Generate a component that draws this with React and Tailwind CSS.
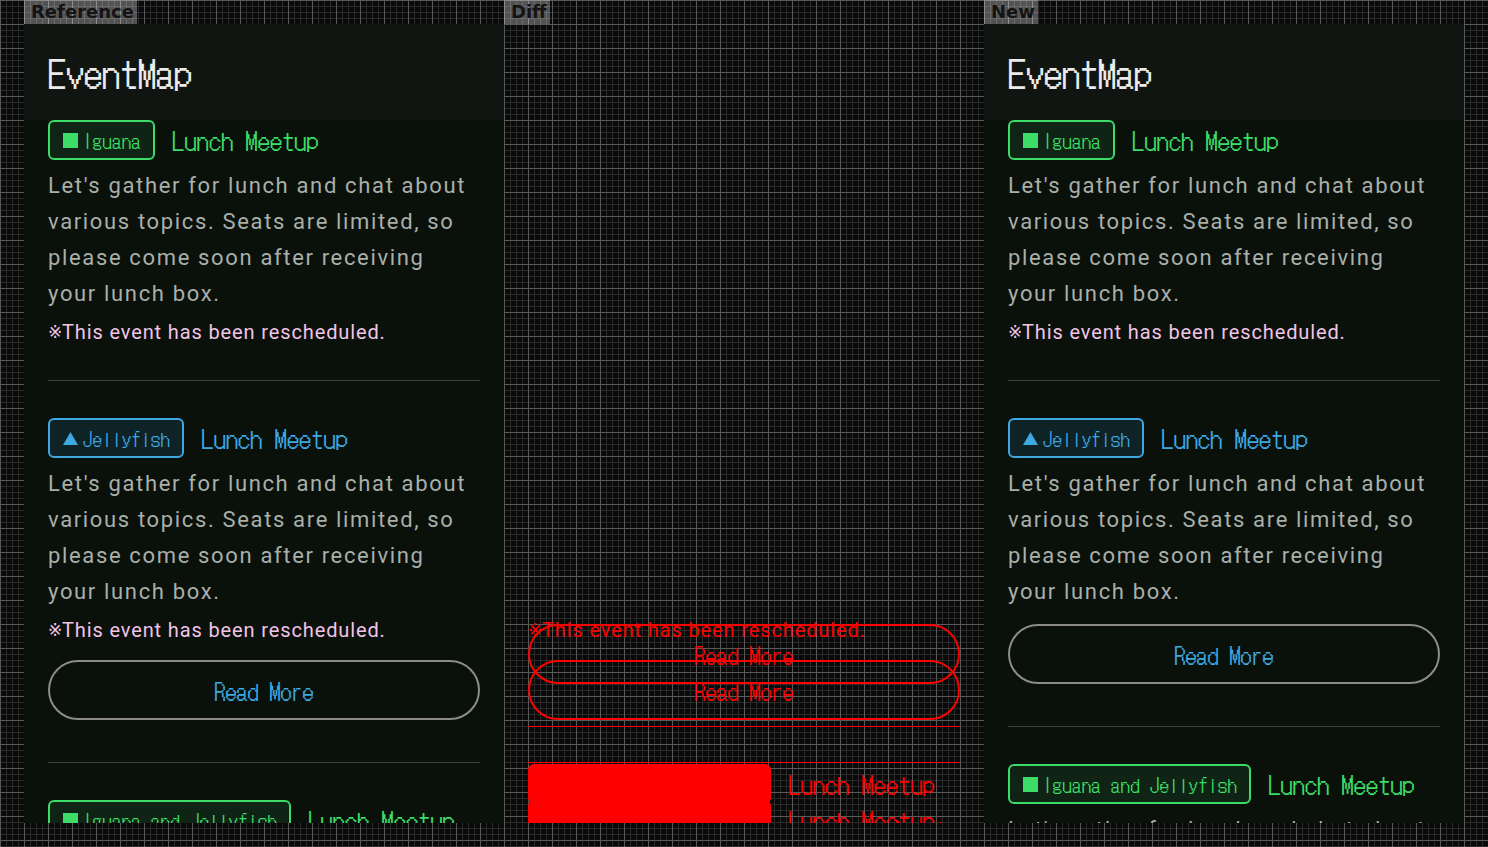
const dot = "font-['DotGothic16',monospace]";
const body = "font-['Roboto','Noto_Sans_CJK_JP',sans-serif]";

const refEvents = [
  { kind: "iguana", label: "Iguana", note: true, more: false },
  { kind: "jelly", label: "Jellyfish", note: true, more: true },
  { kind: "iguana", label: "Iguana and Jellyfish", note: true, more: true },
];

const newEvents = [
  { kind: "iguana", label: "Iguana", note: true, more: false },
  { kind: "jelly", label: "Jellyfish", note: false, more: true },
  { kind: "iguana", label: "Iguana and Jellyfish", note: true, more: true },
];

const desc =
  "Let's gather for lunch and chat about various topics. Seats are limited, so please come soon after receiving your lunch box.";

function Tag({ kind, label, mode }) {
  const green = kind === "iguana";
  const red = mode === "all";
  const box = red
    ? "border-[#ff0000] bg-[#ff0000] text-[#ff0000]"
    : green
    ? "border-[#3ddc68] bg-[#0f2414] text-[#3ddc68]"
    : "border-[#3ea8e0] bg-[#0f2226] text-[#3ea8e0]";
  return (
    <div className={`h-10 shrink-0 flex items-center gap-[5px] pl-3 pr-3 border-2 rounded-md ${box}`}>
      <span className="w-4 h-4 flex items-center justify-center">
        {green ? (
          <span className={`w-[15px] h-[15px] ${red ? "bg-[#ff0000]" : "bg-[#3ddc68]"}`} />
        ) : (
          <svg width="15" height="13" viewBox="0 0 15 13">
            <path d="M7.5 0 L15 13 L0 13 Z" fill={red ? "#ff0000" : "#3ea8e0"} />
          </svg>
        )}
      </span>
      <span className={`${dot} text-[18px] leading-none tracking-[0.04em]`}>{label}</span>
    </div>
  );
}

function Event({ ev, first, mode }) {
  // mode: normal | hidden | tail | all (the last three are for the diff layer)
  const hideHead = mode === "hidden" || mode === "tail";
  const redHead = mode === "all";
  const hideTail = mode === "hidden";
  const redTail = mode === "tail" || mode === "all";
  const titleColor = redHead ? "text-[#ff0000]" : ev.kind === "iguana" ? "text-[#3ddc68]" : "text-[#3ea8e0]";

  return (
    <article className={`${first ? "pt-0" : "pt-[37px]"} pb-8`}>
      <div className={`flex items-center gap-[17px] h-10 ${hideHead ? "invisible" : ""}`}>
        <Tag kind={ev.kind} label={ev.label} mode={mode} />
        <h2 className={`${dot} text-[24px] leading-none tracking-[0.2px] ${titleColor}`}>Lunch Meetup</h2>
      </div>
      <p
        className={`mt-2 ${body} text-[22px] leading-9 tracking-[0.075em] ${
          hideHead ? "invisible" : redHead ? "text-[#ff0000]" : "text-[#a9afa9]"
        }`}
      >
        {desc}
      </p>
      {ev.note && (
        <p
          className={`mt-1 h-8 flex items-center ${body} text-[20px] leading-8 tracking-[0.87px] ${
            hideTail ? "invisible" : redTail ? "text-[#ff0000]" : "text-[#f2c4e6]"
          }`}
        >
          <span className="w-[14px] shrink-0 font-['DejaVu_Sans',sans-serif] text-[17px] leading-none tracking-normal">
            ※
          </span>
          <span>This event has been rescheduled.</span>
        </p>
      )}
      {ev.more && (
        <button
          className={`mt-[14px] mb-[10px] w-full h-[60px] rounded-full border-2 ${dot} text-[22px] ${
            hideTail
              ? "invisible"
              : redTail
              ? "border-[#ff0000] text-[#ff0000]"
              : "border-[#8c8c8c] text-[#3ea8e0]"
          }`}
        >
          Read More
        </button>
      )}
    </article>
  );
}

function Panel({ events, ghost }) {
  return (
    <div className="h-[799px] overflow-hidden flex flex-col">
      <header className={`h-24 shrink-0 px-6 flex items-center ${ghost ? "" : "bg-[#111512]"}`}>
        <h1 className={`${dot} text-[36px] leading-none ${ghost ? "invisible" : "text-[#ebebeb]"}`}>EventMap</h1>
      </header>
      <main className={`flex-1 px-6 ${ghost ? "" : "bg-[#0a110b]"}`}>
        {events.map((ev, i) => {
          const mode = !ghost ? "normal" : i === 0 ? "hidden" : i === 1 ? "tail" : "all";
          return (
            <div key={i}>
              {i > 0 && (
                <div
                  className={`h-px ${
                    !ghost ? "bg-[#3b403b]" : i === 1 ? "invisible" : "bg-[#ff0000]"
                  }`}
                />
              )}
              <Event ev={ev} first={i === 0} mode={mode} />
            </div>
          );
        })}
      </main>
    </div>
  );
}

function Label({ children }) {
  return (
    <div className="self-start h-6 pl-[7px] pr-[3px] bg-white/30 font-['DejaVu_Sans',sans-serif] font-bold text-[18px] leading-6 text-[#141414]">
      {children}
    </div>
  );
}

export default function App() {
  return (
    <div className="w-[1488px] h-[847px] overflow-hidden bg-[#0a0a0a] [background-image:linear-gradient(to_right,#5a5a5a_1px,transparent_1px),linear-gradient(to_bottom,#5a5a5a_1px,transparent_1px),linear-gradient(to_right,#2a2a2a_1px,transparent_1px),linear-gradient(to_bottom,#2a2a2a_1px,transparent_1px)] [background-size:24px_24px,24px_24px,6px_6px,6px_6px]">
      <div className="flex pl-6">
        <section className="w-[480px] flex flex-col">
          <Label>Reference</Label>
          <Panel events={refEvents} />
        </section>
        <section className="w-[480px] flex flex-col">
          <Label>Diff</Label>
          <div className="grid">
            <div className="[grid-area:1/1]">
              <Panel events={refEvents} ghost />
            </div>
            <div className="[grid-area:1/1]">
              <Panel events={newEvents} ghost />
            </div>
          </div>
        </section>
        <section className="w-[480px] flex flex-col">
          <Label>New</Label>
          <Panel events={newEvents} />
        </section>
      </div>
    </div>
  );
}
